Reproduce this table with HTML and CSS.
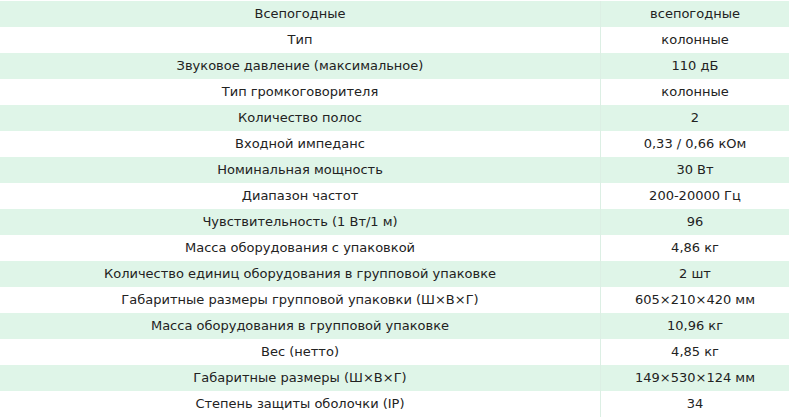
FILE: index.html
```html
<!DOCTYPE html>
<html lang="ru">
<head>
<meta charset="utf-8">
<link rel="stylesheet" href="styles.css">
</head>
<body>
<table class="specs">
<tbody>
<tr><td class="name">Всепогодные</td><td class="val">всепогодные</td></tr>
<tr><td class="name">Тип</td><td class="val">колонные</td></tr>
<tr><td class="name">Звуковое давление (максимальное)</td><td class="val">110 дБ</td></tr>
<tr><td class="name">Тип громкоговорителя</td><td class="val">колонные</td></tr>
<tr><td class="name">Количество полос</td><td class="val">2</td></tr>
<tr><td class="name">Входной импеданс</td><td class="val">0,33 / 0,66 кОм</td></tr>
<tr><td class="name">Номинальная мощность</td><td class="val">30 Вт</td></tr>
<tr><td class="name">Диапазон частот</td><td class="val">200-20000 Гц</td></tr>
<tr><td class="name">Чувствительность (1 Вт/1 м)</td><td class="val">96</td></tr>
<tr><td class="name">Масса оборудования с упаковкой</td><td class="val">4,86 кг</td></tr>
<tr><td class="name">Количество единиц оборудования в групповой упаковке</td><td class="val">2 шт</td></tr>
<tr><td class="name">Габаритные размеры групповой упаковки (Ш×В×Г)</td><td class="val">605×210×420 мм</td></tr>
<tr><td class="name">Масса оборудования в групповой упаковке</td><td class="val">10,96 кг</td></tr>
<tr><td class="name">Вес (нетто)</td><td class="val">4,85 кг</td></tr>
<tr><td class="name">Габаритные размеры (Ш×В×Г)</td><td class="val">149×530×124 мм</td></tr>
<tr><td class="name">Степень защиты оболочки (IP)</td><td class="val">34</td></tr>
</tbody>
</table>
</body>
</html>
```

FILE: styles.css
```css
html, body {
  margin: 0;
  padding: 0;
  background: #ffffff;
}
body {
  padding-top: 1px;
  font-family: "DejaVu Sans", Verdana, sans-serif;
  font-size: 13px;
  color: #222222;
}
.specs {
  width: 789px;
  border-collapse: collapse;
  table-layout: fixed;
}
.specs tr {
  height: 26px;
}
.specs tr:nth-child(odd) {
  background: #dff5e8;
}
.specs td {
  padding: 0;
  text-align: center;
  vertical-align: middle;
  line-height: 26px;
  white-space: nowrap;
}
.specs .name {
  width: 600px;
  border-right: 1px solid #dcefe4;
}
```
